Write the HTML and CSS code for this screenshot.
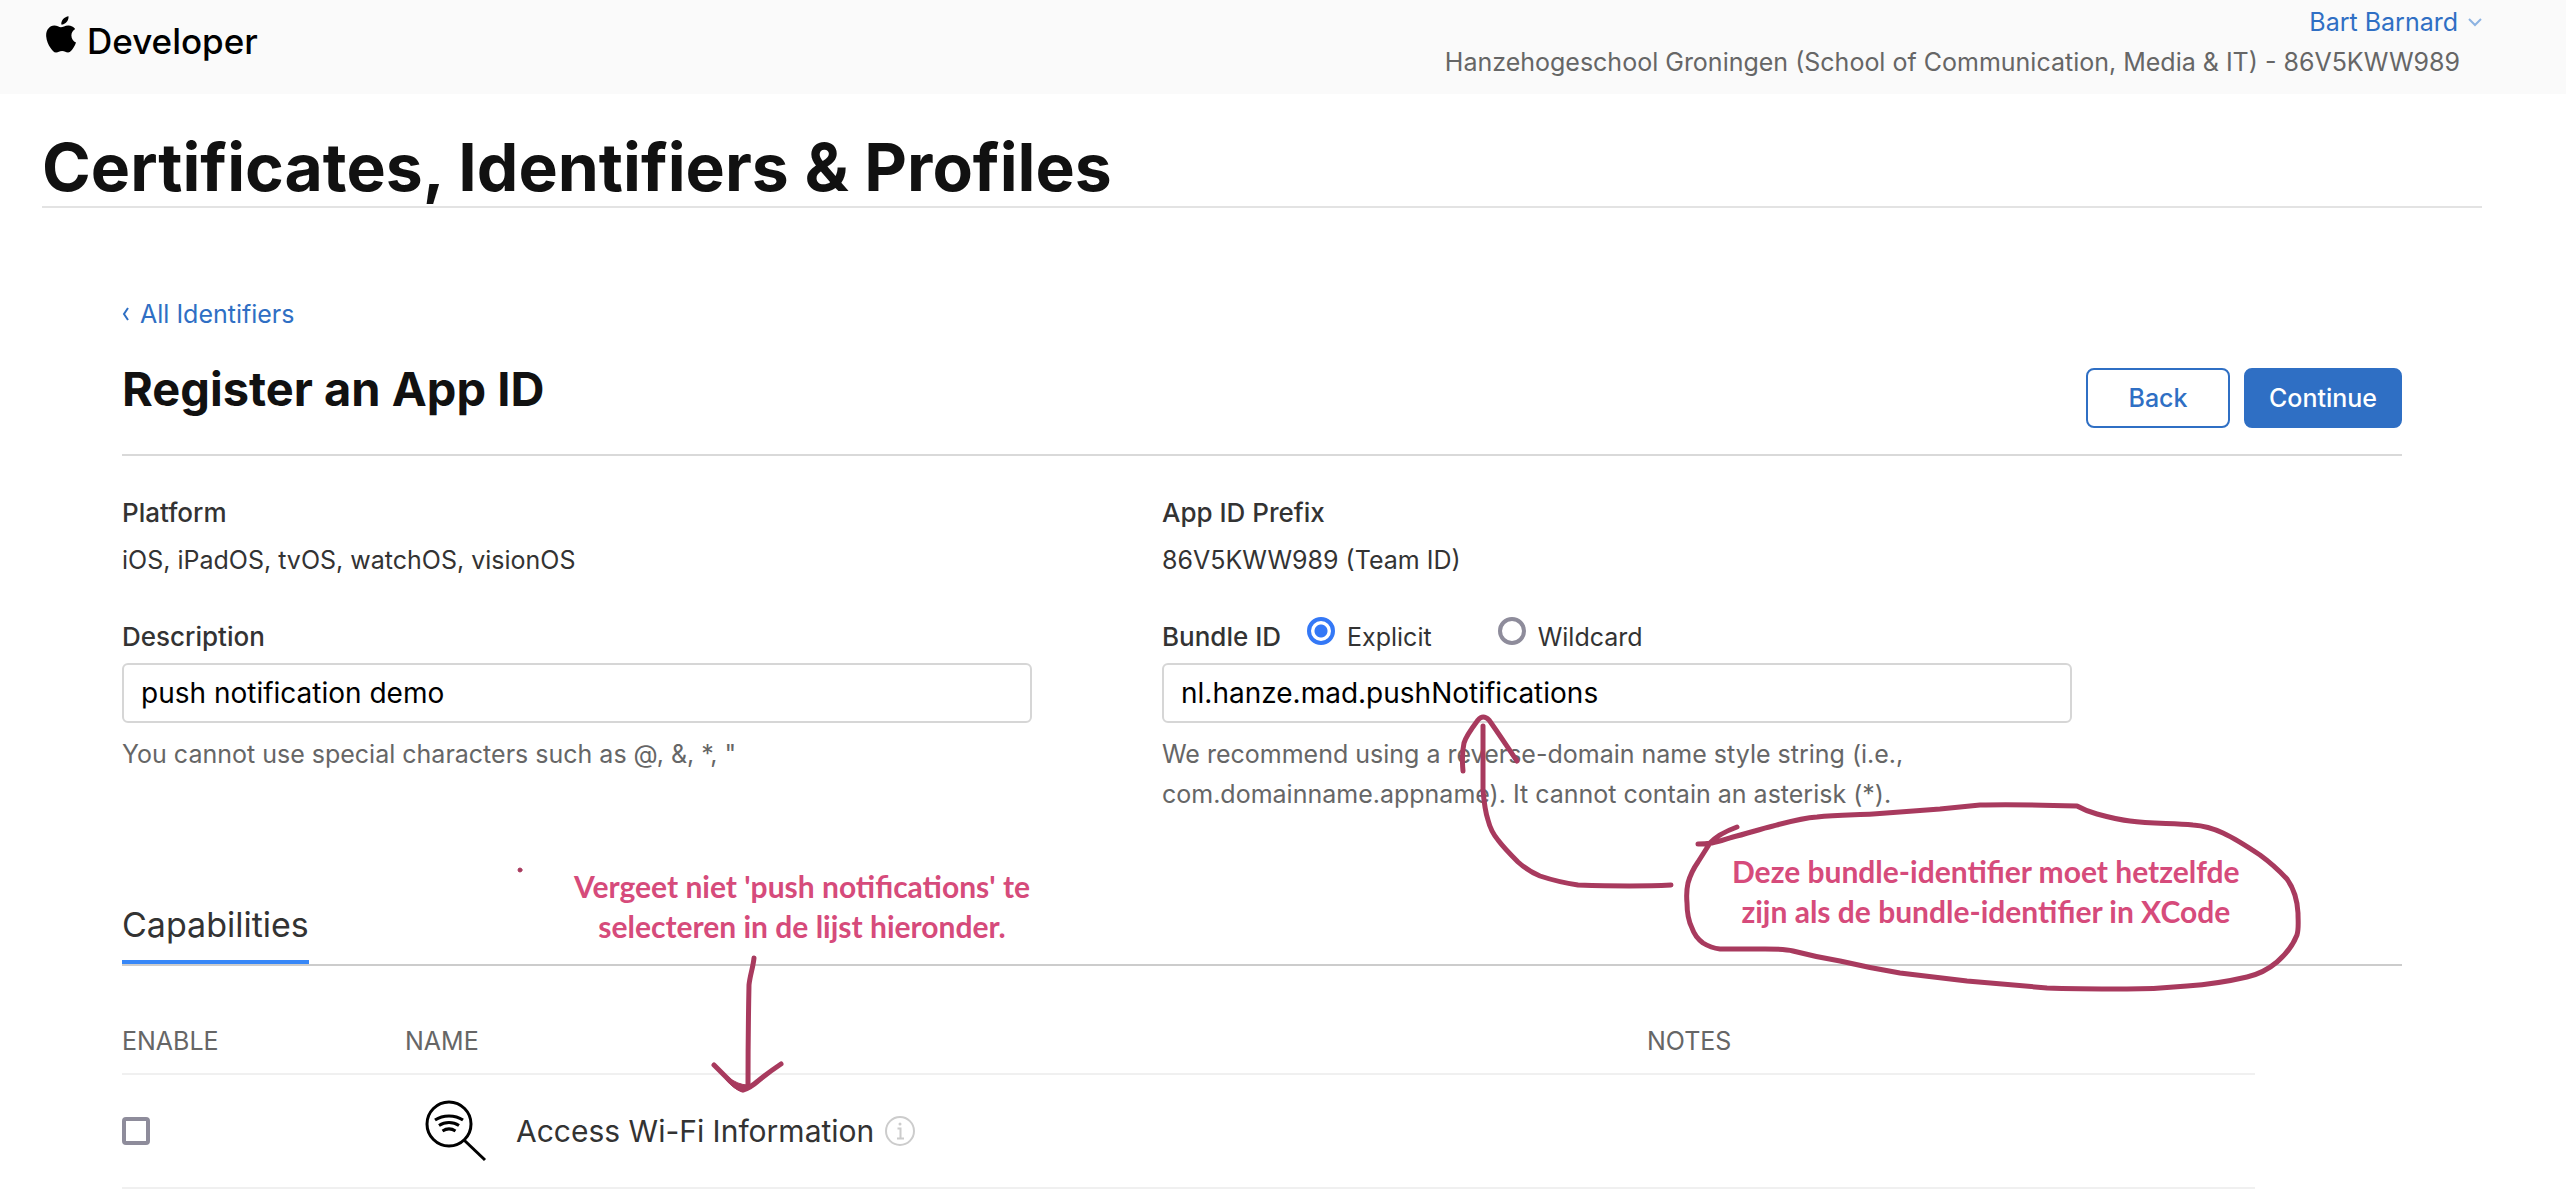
FILE: index.html
```html
<!DOCTYPE html>
<html lang="en">
<head>
<meta charset="utf-8">
<title>Register an App ID - Certificates, Identifiers &amp; Profiles</title>
<link rel="stylesheet" href="styles.css">
</head>
<body>
<header class="topbar">
  <a class="brand" href="#">
    <svg class="brand-logo" viewBox="0 0 30 38" aria-hidden="true"><path d="M22.500 0.300c0.200 2.100-.6 4.200-1.900 5.700-1.300 1.500-3.300 2.700-5.300 2.600-.2-2 .7-4.100 1.900-5.500 1.300-1.500 3.500-2.700 5.300-2.800zM29.200 13c-2.300 1.400-3.800 3.700-3.800 6.500 0 3.200 1.900 5.900 4.600 7-.5 1.700-1.300 3.400-2.400 5-1.500 2.200-3.100 4.900-5.500 4.900-2.500 0-3.100-1.400-6-1.400-2.800 0-3.700 1.500-6 1.500-2.400 0-4-2.400-5.700-4.800C2.400 28.900.6 24.600.2 20.400-.3 14.500 3.100 9.600 8.300 9.500c2.700 0 4.800 1.700 6.600 1.700 1.700 0 4.400-1.900 7.500-1.800 2.700.1 5.200 1.300 6.800 3.600z"/></svg>
    <span>Developer</span>
  </a>
  <div class="account">
    <a class="account-name" href="#">Bart Barnard
      <svg class="chevron" viewBox="0 0 14 10" aria-hidden="true"><path d="M1 2l6 6 6-6"/></svg>
    </a>
    <span class="account-team">Hanzehogeschool Groningen (School of Communication, Media &amp; IT) - 86V5KWW989</span>
  </div>
</header>

<main class="page">
  <h1 class="page-title">Certificates, Identifiers &amp; Profiles</h1>
  <form class="content">
    <a class="back-link" href="#"><svg class="back-chevron" viewBox="0 0 8 14" aria-hidden="true"><path d="M6 1L2 7l4 6"/></svg>All Identifiers</a>
    <div class="heading-row">
      <h2>Register an App ID</h2>
      <div class="actions">
        <button class="btn" type="button">Back</button>
        <button class="btn btn-primary" type="button">Continue</button>
      </div>
    </div>

    <div class="details">
      <div class="column">
        <div class="info">
          <h3>Platform</h3>
          <p>iOS, iPadOS, tvOS, watchOS, visionOS</p>
        </div>
        <div class="field">
          <div class="field-head"><label class="field-label" for="description">Description</label></div>
          <input class="text-input" id="description" type="text" value="push notification demo">
          <p class="hint">You cannot use special characters such as @, &amp;, *, "</p>
        </div>
      </div>
      <div class="column">
        <div class="info">
          <h3>App ID Prefix</h3>
          <p>86V5KWW989 (Team ID)</p>
        </div>
        <div class="field">
          <div class="field-head">
            <label class="field-label" for="bundle">Bundle ID</label>
            <label class="choice"><input class="radio" type="radio" name="kind" checked>Explicit</label>
            <label class="choice"><input class="radio" type="radio" name="kind">Wildcard</label>
          </div>
          <input class="text-input" id="bundle" type="text" value="nl.hanze.mad.pushNotifications">
          <p class="hint">We recommend using a reverse-domain name style string (i.e.,<br>com.domainname.appname). It cannot contain an asterisk (*).</p>
        </div>
      </div>
    </div>

    <nav class="tabs"><a class="tab" href="#">Capabilities</a></nav>

    <table class="capabilities">
      <colgroup><col class="col-enable"><col class="col-name"><col></colgroup>
      <thead><tr><th>ENABLE</th><th>NAME</th><th>NOTES</th></tr></thead>
      <tbody>
        <tr>
          <td><input class="checkbox" type="checkbox" id="wifi"></td>
          <td>
            <div class="capability">
              <svg class="capability-icon" viewBox="0 0 64 64" aria-hidden="true"><circle cx="25" cy="25" r="22"/><path d="M40 41l21 20"/><path d="M11 21c8-5.500 20-5.500 28 0M15 26.500c6-4 14-4 20 0M18.500 32c4-2.600 9-2.600 13 0"/></svg>
              <label for="wifi">Access Wi-Fi Information</label>
              <svg class="info-icon" viewBox="0 0 30 30" aria-hidden="true"><circle cx="15" cy="15" r="14"/><path d="M12.500 12.500h3v10M12 22.500h7"/><circle class="info-dot" cx="15" cy="8" r="1.500"/></svg>
            </div>
          </td>
          <td></td>
        </tr>
      </tbody>
    </table>
  </form>
</main>

<svg class="ink" viewBox="0 0 2566 1204" width="2566" height="1204" aria-hidden="true">
  <path d="M1463 771C1462 760 1462 752 1464 743C1466 736 1472 728 1478 720Q1483 714 1489 720C1499 734 1508 748 1517 761"/>
  <path d="M1483 726V790C1484 802 1485 811 1488 820C1490 828 1493 834 1498 840C1504 848 1511 855 1518 862Q1528 871 1540 876Q1558 882 1578 885C1610 886 1650 886 1671 885"/>
  <path d="M1698 844Q1705 844 1712 843C1719 842 1726 839 1733 837C1746 834 1760 829 1773 826C1788 822 1802 818 1817 817C1836 815 1855 815 1873 814L1940 809L1980 805C2012 804 2045 805 2077 806Q2086 811 2097 814C2108 817 2119 820 2130 821C2151 824 2172 823 2193 825Q2208 826 2223 833C2236 839 2248 847 2260 855Q2275 866 2287 879Q2297 893 2298 913C2298 921 2299 928 2297 935Q2291 950 2277 962Q2264 973 2247 977Q2217 984 2187 986Q2157 989 2127 989C2100 989 2073 989 2047 988L1967 981L1900 973Q1870 968 1840 961Q1816 957 1793 951Q1785 949 1765 949H1720Q1711 948 1703 943Q1695 937 1692 928C1688 920 1687 911 1687 903Q1686 892 1688 883Q1691 872 1698 862L1710 843Q1718 834 1737 827"/>
  <path d="M754 958C753 968 750 975 749 985Q748 1035 748 1085"/>
  <path d="M714 1065L730 1081Q737 1088 743 1090Q750 1088 758 1081Q769 1072 781 1064"/>
  <path class="ink-fill" d="M728 1077Q738 1085 748 1085Q745 1092 742 1092Q734 1089 726 1080z"/>
  <circle class="ink-fill" cx="520" cy="870" r="2"/>
</svg>
<p class="note note-list">Vergeet niet 'push notifications' te<br>selecteren in de lijst hieronder.</p>
<p class="note note-bundle">Deze bundle-identifier moet hetzelfde<br>zijn als de bundle-identifier in XCode</p>
</body>
</html>
```
FILE: styles.css
```css
* { box-sizing: border-box; }
body {
  margin: 0;
  position: relative;
  background: #fff;
  color: #333;
  font: 25px/40px Inter, "Liberation Sans", sans-serif;
}
h1, h2, h3, p { margin: 0; }
a { color: #2f6fc4; text-decoration: none; }
svg { flex: none; }

.topbar {
  display: flex;
  justify-content: space-between;
  height: 94px;
  padding: 0 84px 0 46px;
  background: #fafafa;
}
.brand {
  display: flex;
  gap: 11px;
  padding-top: 16px;
  color: #000;
  font-size: 35px;
  font-weight: 500;
  line-height: 50px;
}
.brand-logo { width: 30px; height: 38px; }
.account {
  display: flex;
  flex-direction: column;
  align-items: flex-end;
  padding-top: 2px;
}
.account-name { display: flex; align-items: center; gap: 10px; }
.chevron { width: 14px; height: 10px; fill: none; stroke: #8db3e2; stroke-width: 2; }
.account-team { padding-right: 22px; color: #666; }

.page { padding: 36px 84px 0 42px; }
.page-title {
  padding-bottom: 2px;
  border-bottom: 2px solid #e3e3e3;
  color: #111;
  font-size: 66px;
  font-weight: 700;
  line-height: 74px;
}
.content { padding: 86px 80px 0; }
.back-link { display: flex; align-items: center; gap: 10px; }
.back-chevron { width: 8px; height: 14px; fill: none; stroke: #2f6fc4; stroke-width: 2; }

.heading-row {
  display: flex;
  justify-content: space-between;
  align-items: flex-start;
  margin-top: 26px;
  padding: 8px 0 26px;
  border-bottom: 2px solid #d9d9d9;
}
h2 { color: #111; font-size: 47px; font-weight: 700; line-height: 42px; }
.actions { display: flex; gap: 14px; }
.btn {
  min-width: 144px;
  height: 60px;
  padding: 0 22px;
  border: 2px solid #2f6fc4;
  border-radius: 8px;
  background: #fff;
  color: #2f6fc4;
  font: 500 25px/40px Inter, "Liberation Sans", sans-serif;
}
.btn-primary { min-width: 158px; background: #2f6fc4; color: #fff; }

.details { display: grid; grid-template-columns: 1040fr 1240fr; padding-top: 34px; }
.info h3 { font-size: 26px; font-weight: 500; line-height: 46px; }
.info p { line-height: 48px; }
.field { display: flex; flex-direction: column; max-width: 910px; margin-top: 28px; }
.field-head { display: flex; height: 51px; line-height: 50px; }
.field-label { font-size: 26px; font-weight: 500; }
.choice { display: flex; margin-left: 26px; }
.choice + .choice { margin-left: 66px; }
.radio, .checkbox {
  appearance: none;
  width: 28px;
  height: 28px;
  margin: 0;
  border: 4px solid #8e8c9b;
  background: #fff;
}
.radio { margin: 5px 12px 0 0; border-radius: 50%; }
.radio:checked { border-color: #3478f6; background: radial-gradient(circle, #3478f6 6px, #fff 7px); }
.checkbox { display: block; border-radius: 4px; }
.text-input {
  height: 60px;
  padding: 0 17px;
  border: 2px solid #d6d6d6;
  border-radius: 6px;
  background: #fff;
  color: #000;
  font: 28px/40px Inter, "Liberation Sans", sans-serif;
}
.hint { padding-top: 11px; color: #666; }

.tabs { display: flex; margin-top: 86px; border-bottom: 2px solid #ccc; }
.tab {
  padding-bottom: 10px;
  border-bottom: 4px solid #3787f7;
  color: #333;
  font-size: 34px;
  line-height: 50px;
}

.capabilities {
  width: 93.55%;
  border-collapse: collapse;
  table-layout: fixed;
}
.col-enable { width: 283px; }
.col-name { width: 1242px; }
.capabilities th {
  height: 108px;
  padding: 42px 0 0;
  border-bottom: 2px solid #f0f0f0;
  color: #666;
  font-weight: 400;
  text-align: left;
}
.capabilities td { height: 114px; padding: 0; border-bottom: 2px solid #f0f0f0; }
.capability { display: flex; align-items: center; padding-left: 19px; font-size: 30px; }
.capability label { margin: 0 11px 0 28px; }
.capability-icon { width: 64px; height: 64px; fill: none; stroke: #000; stroke-width: 3; }
.info-icon { width: 30px; height: 30px; fill: none; stroke: #ccc; stroke-width: 2; }
.info-dot { fill: #ccc; stroke: none; }

/* hand-drawn notes laid over the page */
.ink {
  position: absolute;
  top: 0;
  left: 0;
  max-width: 100%;
  fill: none;
  stroke: #a83a5e;
  stroke-width: 5;
  stroke-linecap: round;
  stroke-linejoin: round;
  pointer-events: none;
}
.ink-fill { fill: #a83a5e; stroke-width: 1; }
.note {
  position: absolute;
  color: #d64b7b;
  font: 700 30px/40px Lato, "Liberation Sans", sans-serif;
  text-align: center;
  white-space: nowrap;
}
.note-list { top: 866px; left: 574px; }
.note-bundle { top: 851px; left: 1732px; }
```
